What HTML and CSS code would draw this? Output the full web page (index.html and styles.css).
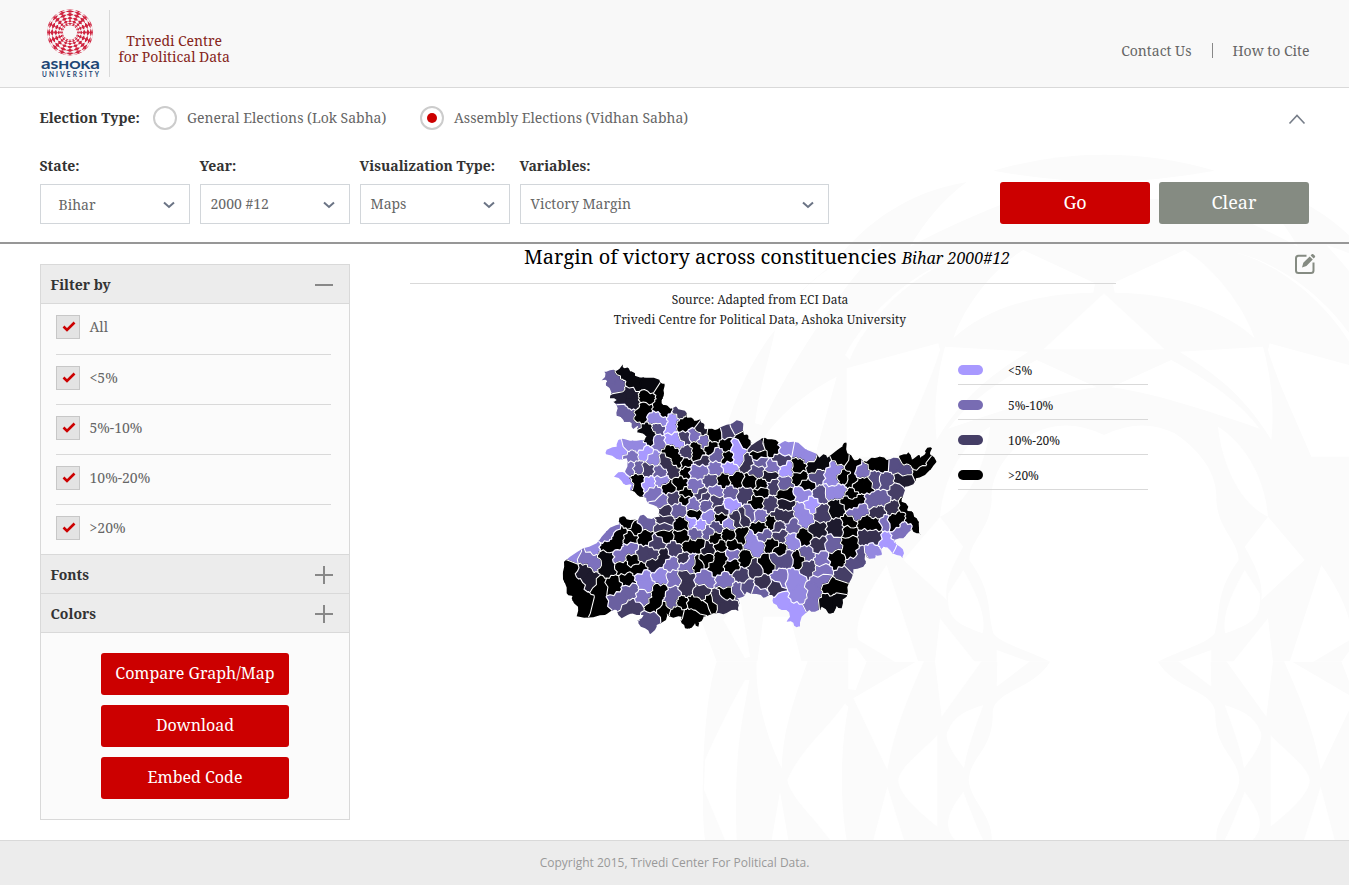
FILE: index.html
```html
<!DOCTYPE html>
<html lang="en">
<head>
<meta charset="utf-8">
<title>Trivedi Centre for Political Data</title>
<link rel="stylesheet" href="styles.css">
</head>
<body>
<svg class="watermark" viewBox="0 0 1947 2070" aria-hidden="true">
  <defs>
    <g id="wm-half">
      <path class="wm-fill" d="M880 62Q1040 14 1212 14V96Q1040 92 880 62Z"/>
      <path class="wm-fill" d="M800 96C600 130 480 240 400 340C330 400 270 440 225 540C160 620 100 740 60 900C20 1050 0 1200 0 1400L50 1535H1050C980 1500 900 1480 880 1450C860 1380 880 1330 808 1230C810 1170 870 1140 875 1050C870 960 940 890 1000 850Q1100 800 1212 855V150Q1000 140 900 165Q740 230 630 290Q700 170 800 96Z"/>
      <path class="wm-fill" d="M50 1535C10 1650 0 1950 15 2070H875C880 2000 810 1950 806 1890C810 1820 880 1800 878 1690C880 1620 1000 1620 1050 1535Z"/>
      <g class="wm-cut">
        <path d="M545 285C420 420 280 620 185 825L165 820C180 700 215 600 225 540C300 400 400 330 545 285Z"/>
        <path d="M850 300C680 330 520 460 435 615L450 630C480 540 640 340 850 300Z"/>
        <path d="M440 655L715 580L720 600C690 700 640 800 590 920H440Z"/>
        <path d="M970 300L1185 400L1180 428C1000 430 850 480 760 565C800 450 900 340 970 300Z"/>
        <path d="M735 590L985 605C900 660 800 720 710 870C700 780 710 680 735 590Z"/>
        <path d="M1212 430L1030 598H1212Z"/>
        <path d="M1010 630L1190 712C1050 730 850 800 745 836C800 760 900 690 1010 630Z"/>
        <path d="M410 680C330 720 220 800 170 900H350Z"/>
        <path d="M870 830C860 930 810 1060 720 1100C730 980 790 880 870 830Z"/>
        <path d="M720 1100L790 1190C750 1260 735 1300 740 1350L610 1230Z"/>
        <path d="M70 1410L120 1340L150 1520L135 1525Z"/>
        <path d="M190 1400L270 1400L305 1536H172Z"/>
        <path d="M560 1245L655 1536H585L475 1470C460 1420 500 1330 560 1245Z"/>
        <path d="M445 1495H470L500 1536H445Z"/>
        <path d="M720 1405L825 1536H705Z"/>
        <path d="M790 1260C830 1330 860 1400 848 1450C760 1420 740 1400 745 1330Z"/>
        <path d="M890 1500L990 1536H890Z"/>
        <path d="M170 1534H323C270 1680 250 1750 245 1855C190 1740 165 1620 170 1534Z"/>
        <path d="M135 1590L148 1590C130 1700 100 1800 110 2070H75L12 1920L15 1830C50 1750 100 1650 135 1590Z"/>
        <path d="M435 1660L445 1670C420 1800 420 1950 440 2070H390C340 2000 270 1940 262 1890C300 1800 380 1740 435 1660Z"/>
        <path d="M650 1534H672C620 1650 580 1750 562 1860L460 1645Z"/>
        <path d="M500 1534H445V1618L467 1620Z"/>
        <path d="M705 1534H845L725 1700Z"/>
        <path d="M712 1755V2030C650 1980 595 1930 595 1890C600 1850 660 1810 712 1755Z"/>
        <path d="M850 1665C830 1720 800 1800 792 1855C750 1800 730 1760 745 1740C760 1700 800 1680 850 1665Z"/>
        <path d="M892 1534H990L890 1610Z"/>
        <path d="M240 1925L265 2070H215Z"/>
        <path d="M562 1910L612 2070H520Z"/>
        <path d="M790 1925C810 1980 830 2030 850 2070H765C730 2030 740 1990 790 1925Z"/>
      </g>
    </g>
  </defs>
  <use href="#wm-half"/>
  <use href="#wm-half" transform="translate(2424 0) scale(-1 1)"/>
</svg>

<header class="site-header">
  <div class="brand">
    <svg class="logo" width="60" height="72" viewBox="0 0 60 72" role="img" aria-label="Ashoka University">
      <path id="logo-rings" class="logo-rings"/>
      <text class="logo-name" x="0" y="59.500" textLength="59" lengthAdjust="spacingAndGlyphs"><tspan class="tall">a</tspan>SHOK<tspan class="tall">a</tspan></text>
      <text class="logo-sub" x="1" y="67.700" textLength="57">UNIVERSITY</text>
    </svg>
    <div class="brand-title"><span>Trivedi Centre</span><span>for Political Data</span></div>
  </div>
  <nav class="top-nav"><a>Contact Us</a><span class="nav-sep"></span><a>How to Cite</a></nav>
</header>

<section class="search">
  <div class="type-row">
    <span class="label type-label">Election Type:</span>
    <span class="radio"></span><span class="type-name general">General Elections (Lok Sabha)</span>
    <span class="radio checked"></span><span class="type-name">Assembly Elections (Vidhan Sabha)</span>
    <svg class="collapse" width="18" height="12" viewBox="0 0 18 12"><path d="M1.500 10.500L9 2.500L16.500 10.500"/></svg>
  </div>
  <div class="field-row">
    <div class="field"><span class="label">State:</span><div class="select first"><span>Bihar</span><svg width="12" height="8" viewBox="0 0 12 8"><path d="M1 1.500L6 6L11 1.500"/></svg></div></div>
    <div class="field"><span class="label">Year:</span><div class="select"><span>2000 #12</span><svg width="12" height="8" viewBox="0 0 12 8"><path d="M1 1.500L6 6L11 1.500"/></svg></div></div>
    <div class="field"><span class="label">Visualization Type:</span><div class="select"><span>Maps</span><svg width="12" height="8" viewBox="0 0 12 8"><path d="M1 1.500L6 6L11 1.500"/></svg></div></div>
    <div class="field wide"><span class="label">Variables:</span><div class="select"><span>Victory Margin</span><svg width="12" height="8" viewBox="0 0 12 8"><path d="M1 1.500L6 6L11 1.500"/></svg></div></div>
    <div class="actions"><button class="btn go">Go</button><button class="btn clear">Clear</button></div>
  </div>
</section>

<main class="content">
  <aside class="sidebar">
    <div class="panel-head"><span>Filter by</span><span class="toggle minus"></span></div>
    <ul class="filters">
      <li><span class="check"><svg width="14" height="12" viewBox="0 0 14 12"><path d="M1.500 5.500L5 9L12.500 1.500"/></svg></span>All</li>
      <li><span class="check"><svg width="14" height="12" viewBox="0 0 14 12"><path d="M1.500 5.500L5 9L12.500 1.500"/></svg></span>&lt;5%</li>
      <li><span class="check"><svg width="14" height="12" viewBox="0 0 14 12"><path d="M1.500 5.500L5 9L12.500 1.500"/></svg></span>5%-10%</li>
      <li><span class="check"><svg width="14" height="12" viewBox="0 0 14 12"><path d="M1.500 5.500L5 9L12.500 1.500"/></svg></span>10%-20%</li>
      <li><span class="check"><svg width="14" height="12" viewBox="0 0 14 12"><path d="M1.500 5.500L5 9L12.500 1.500"/></svg></span>&gt;20%</li>
    </ul>
    <div class="panel-head"><span>Fonts</span><span class="toggle plus"></span></div>
    <div class="panel-head"><span>Colors</span><span class="toggle plus"></span></div>
    <div class="side-actions">
      <button class="btn side">Compare Graph/Map</button>
      <button class="btn side">Download</button>
      <button class="btn side">Embed Code</button>
    </div>
  </aside>

  <section class="chart">
    <h1 class="chart-title">Margin of victory across constituencies <em>Bihar 2000#12</em></h1>
    <p class="source">Source: Adapted from ECI Data<br>Trivedi Centre for Political Data, Ashoka University</p>
    <div class="map-row">
      <svg id="map" class="map" width="400" height="290" viewBox="0 0 1200 870"></svg>
      <ul class="legend">
        <li><span class="swatch s1"></span><span class="key">&lt;5%</span></li>
        <li><span class="swatch s2"></span><span class="key">5%-10%</span></li>
        <li><span class="swatch s3"></span><span class="key">10%-20%</span></li>
        <li><span class="swatch s4"></span><span class="key">&gt;20%</span></li>
      </ul>
    </div>
  </section>
  <svg class="edit" width="22" height="22" viewBox="0 0 22 22"><path class="edit-box" d="M12.500 2.700H4.500Q2 2.700 2 5.200V17.500Q2 20 4.500 20H17Q19.500 20 19.500 17.500V9.500"/><path class="edit-pen" d="M8 14.500L9.300 9.800L15.700 3.400L18.800 6.500L12.400 12.900Z M16.600 2.500L18 1.100Q18.800 .6 19.600 1.400L20.900 2.700Q21.500 3.500 20.900 4.200L19.600 5.600Z"/></svg>
</main>
<footer class="site-footer">Copyright 2015, Trivedi Center For Political Data.</footer>
<script src="map.js"></script>
</body>
</html>
```

FILE: styles.css
```css
* { box-sizing: border-box; }
body {
  margin: 0;
  height: 885px;
  display: flex;
  flex-direction: column;
  overflow: hidden;
  background: #fff;
  color: #666;
  font: 14px/20px "Noto Serif", "Droid Serif", "DejaVu Serif Condensed", serif;
}
ul, h1, p { margin: 0; padding: 0; list-style: none; font-weight: normal; }
.watermark { position: absolute; left: 700px; top: 150px; width: 649px; height: 690px; z-index: -1; }
.wm-fill { fill: #fbfbfb; }
.wm-cut { fill: #fff; }

.site-header { height: 88px; flex: none; display: flex; justify-content: space-between; padding: 0 39.5px 0 40px; background: #f8f8f8; border-bottom: 1px solid #d9d9d9; }
.brand { display: flex; padding-top: 9px; }
.logo { margin-left: 1px; overflow: visible; }
.logo-rings { fill: #cf2440; fill-rule: evenodd; }
.logo-name { font: 900 11.5px "Lato", sans-serif; fill: #1d4675; }
.logo-name .tall { font-size: 15.5px; font-weight: bold; }
.logo-sub { font: bold 6.5px "Lato", sans-serif; fill: #1d4675; }
.brand-title { display: flex; flex-direction: column; margin: 1px 0 0 8px; padding: 23px 0 0 8.5px; height: 67px; border-left: 1px solid #d9d9d9; text-align: center; line-height: 16px; letter-spacing: -.03px; color: #86251b; }
.top-nav { display: flex; align-items: center; padding-top: 14px; }
.nav-sep { width: 1px; height: 15px; margin: 0 19px 0 21px; background: #888; }

.search { height: 156px; flex: none; padding: 18px 40px 0; border-bottom: 2px solid #979797; }
.label { font-weight: bold; color: #333; margin-left: -.5px; }
.type-row { display: flex; align-items: center; height: 24px; }
.type-label { width: 113.5px; }
.type-name { margin-left: 10px; white-space: nowrap; }
.type-name.general { width: 233px; }
.radio { width: 24px; height: 24px; flex: none; border: 2px solid #ccc; border-radius: 50%; background: #fff; display: flex; align-items: center; justify-content: center; }
.radio.checked::after { content: ""; width: 10px; height: 10px; border-radius: 50%; background: #c00; }
.collapse { margin: 2px 3px 0 auto; }
.collapse path { fill: none; stroke: #777e89; stroke-width: 1.6; }
.field-row { display: flex; gap: 10px; margin-top: 26px; }
.field { width: 150px; }
.field.wide { width: 309px; }
.field .label { display: block; height: 28px; white-space: nowrap; }
.select { height: 40px; padding: 0 14px 0 9.5px; display: flex; align-items: center; justify-content: space-between; border: 1px solid #d2d6da; background: #fff; }
.select.first { padding: 0 14px 0 17.5px; }
.select.first span { padding-top: 2px; }
.select svg { margin-top: 2px; }
.select path { fill: none; stroke: #6b7485; stroke-width: 2; }
.btn { border: 0; padding: 0 0 2px; border-radius: 3px; color: #fff; background: #c00; height: 42px; font-family: inherit; }
.actions { display: flex; gap: 9px; margin: 26px 0 0 auto; }
.actions .btn { width: 150px; font-size: 18px; }
.actions .clear { background: #858b82; }

.content { flex: 1; display: flex; padding: 20px 33px 20px 40px; }
.sidebar { width: 310px; flex: none; border: 1px solid #d9d9d9; background: #fbfbfb; }
.panel-head { height: 39px; display: flex; align-items: center; justify-content: space-between; padding: 2px 16px 0 9.5px; background: #ececec; border-bottom: 1px solid #d9d9d9; font-weight: bold; color: #333; }
.toggle { width: 18px; height: 18px; margin-top: -1px; }
.minus { background: linear-gradient(#888, #888) center / 18px 2px no-repeat; }
.plus { background: linear-gradient(#888, #888) center / 18px 2px no-repeat, linear-gradient(#888, #888) center / 2px 18px no-repeat; }
.filters { padding: 0 18px 0 15px; border-bottom: 1px solid #d9d9d9; }
.filters li { height: 50px; display: flex; align-items: center; gap: 9.5px; border-bottom: 1px solid #d9d9d9; padding-bottom: 3px; }
.filters li:first-child { height: 51px; padding-bottom: 4px; }
.filters li:last-child { height: 49px; border: 0; padding-bottom: 3px; }
.check { width: 24px; height: 24px; display: flex; align-items: center; justify-content: center; border: 1px solid #c7c7c7; background: #e3e3e3; }
.check svg { margin-left: 1px; }
.check path { fill: none; stroke: #c00; stroke-width: 2.6; }
.side-actions { display: flex; flex-direction: column; align-items: center; gap: 10px; padding-top: 20px; }
.side { width: 188px; font-size: 16px; }

.chart { width: 738px; margin: -20px 0 0 60px; color: #222; }
.chart-title { width: 706px; height: 40px; padding-left: 8px; border-bottom: 1px solid #d9d9d9; font-size: 20px; line-height: 25px; text-align: center; color: #000; white-space: nowrap; }
.chart-title em { font-size: 16px; }
.source { width: 700px; padding-top: 6px; font-size: 12px; text-align: center; }
.map-row { display: flex; margin-top: 25px; }
.map { margin-left: 140px; flex: none; }
.legend { width: 190px; margin-left: 8px; flex: none; font-size: 12px; }
.legend li { height: 35px; display: flex; align-items: center; gap: 25px; padding-top: 6px; border-bottom: 1px solid #d9d9d9; }
.legend li:first-child { height: 30px; padding-top: 1px; }
.key { padding-top: 2px; }
.swatch { width: 25px; height: 10px; border-radius: 5px; }
.s1 { background: #a899ff; } .s2 { background: #786cb3; } .s3 { background: #453e66; } .s4 { background: #000; }
.edit { margin: -11px 0 0 auto; }
.edit-box { fill: none; stroke: #858b82; stroke-width: 2; }
.edit-pen { fill: #858b82; }
.site-footer { height: 45px; flex: none; border-top: 1px solid #d9d9d9; background: #ececec; text-align: center; font: 12px/43px "Open Sans", sans-serif; color: #999; }
```

FILE: map.js
```js
const NS = "http://www.w3.org/2000/svg";
function add(parent, tag, attrs) {
  const el = document.createElementNS(NS, tag);
  for (const k in attrs) el.setAttribute(k, attrs[k]);
  parent.appendChild(el);
  return el;
}

// Emblem: overlapping circles filled even-odd make a rosette of diamonds
let rosette = "";
for (let i = 0; i < 16; i++) {
  const t = i * Math.PI / 8;
  const cx = 29 + 8 * Math.cos(t), cy = 23.5 + 8 * Math.sin(t);
  rosette += `M${cx - 15} ${cy}a15 15 0 1 0 30 0a15 15 0 1 0 -30 0Z`;
}
document.getElementById("logo-rings").setAttribute("d", rosette);

// Margin scale, from narrow to wide victories
const SHADES = { a: "#a899ff", b: "#9488e0", c: "#7d71bd", d: "#6a60a0", e: "#564e83", f: "#453e66", g: "#37314f", h: "#1e1b2e", i: "#08080e", k: "#000" };

// Sheets of constituency anchor points: [dx, dy, "shade x,y x,y; ..."]
const SHEETS = [
 [0, 0, `d 190,65 205,95 180,60; i 215,50 250,85 300,90; h 238,115 215,130 245,145; k 292,130; k 336,110 325,158 345,172;
 d 215,165 238,180 250,212; k 268,185 290,160; b 315,185 335,200; e 330,218; a 368,190 360,220; f 385,172; k 400,210 428,198;
 i 285,228 300,248; c 325,260; a 365,250 385,262; f 405,250; c 432,240; c 460,262; h 455,220; k 495,240; k 530,268; f 530,232;
 e 562,215; k 578,255; a 215,285 185,292; b 235,270 265,272; a 285,295; c 243,305; b 310,312; c 240,340; d 264,340; g 345,322 370,348;
 k 365,290 385,320; k 405,328; k 408,348; f 410,290; k 440,280 445,300; k 482,278; d 500,300; k 535,310; a 560,275 565,312;
 g 455,320; f 292,345; d 330,352; a 215,375 235,395; k 265,375 257,405; a 295,385; b 335,378; k 355,398; k 390,385;
 c 435,350 455,345; c 495,342; a 540,335; e 483,375; k 520,380; k 558,378; c 435,393; c 315,412; k 408,418; f 455,422; c 500,408; d 540,412`],
 [570, 150, `g 52,125; k 92,115 100,130; k 58,152; g 20,175; d 60,170; f 122,165; b 135,130; b 180,135 205,155; c 98,188; a 140,195;
 e 50,197; h 90,213; k 30,230; k 65,243; d 132,235; f 100,242; k 178,185; k 180,218; k 200,240; e 230,215; i 250,170 220,185;
 b 285,190 275,225; k 300,160 312,220; k 340,180 330,230; c 368,195; k 395,170 425,175; e 405,225; e 435,230; e 465,175 490,195;
 k 500,160 535,170 560,150; k 580,165 545,205; h 490,222; f 468,262; k 355,245 380,240; b 270,258 300,258; e 243,268; k 335,266;
 k 325,292 355,290; d 395,290 425,280; f 15,268; k 65,258; k 135,270; b 190,265; a 215,300; b 185,320 195,345; f 245,325; i 290,310;
 c 345,330 365,312; g 412,322; g 460,310; k 330,350; k 330,382; k 375,355 410,358; k 460,355 475,335; k 495,305 515,345 530,375;
 c 475,390 500,370; c 434,355; g 375,395 410,395; h 230,375; h 290,370; f 90,300; k 50,292; h 135,300; g 115,330 140,335;
 d 30,325; c 60,335; k 95,352; f 115,365; d 158,362; k 60,368; d 72,390; b 30,405 50,425; k 193,395; b 155,408; f 120,392; g 235,420; d 280,418; k 95,418; k 120,435`],
 [570, 435, `a 435,120 450,140; a 475,155; b 395,155; k 330,125 335,155; e 365,165 345,190; k 288,175; c 245,178; c 245,212; f 205,200;
 d 202,165; k 175,180; e 110,180 140,175; k 82,190; g 40,205; g 70,255; g 105,262; c 122,235; b 160,235 180,285; a 120,305 170,335;
 c 245,240 220,280 215,315; f 315,230; k 270,262 305,260; i 260,305 300,300; d 60,275; e 20,265`],
 [0, 420, `c 335,18; f 370,10; k 405,10; c 430,28; f 458,5; d 470,30; f 500,20; g 515,42; a 540,30; g 345,48; d 385,45; k 435,62; a 425,80;
 k 398,88; a 450,90; b 475,65; k 512,72; b 535,85; g 558,72; g 582,65; k 235,80; k 255,100; d 288,85; g 345,75; f 340,97; k 345,118;
 k 210,115 170,155 195,145; c 165,125 190,100; k 240,128; k 285,128; f 320,145; f 280,175 310,180; h 315,205 340,185; k 395,125; d 438,115; d 475,112;
 e 500,95; k 535,120; k 495,130; f 375,165; k 418,155 445,150; k 510,155; k 550,150; h 475,160; k 575,125; b 130,155 70,185;
 c 105,190 130,205; i 170,185 172,220; c 240,163 210,185; k 245,195; k 220,215 265,225; k 60,220 75,280 100,325; h 105,225 125,255;
 k 150,270 150,340; k 190,270; k 235,255; b 275,245 290,270; b 330,245; c 365,205; c 372,250; g 402,190; c 410,215 425,200; k 440,205;
 k 470,195; k 515,185 495,215; k 548,210; c 545,180; k 585,195; g 405,245 410,285; c 465,250; c 527,260; f 575,240; d 565,285;
 d 240,285 205,320; f 250,340 230,350; c 282,305; k 325,290 312,330; d 372,300 365,325; g 450,293; k 530,293; g 505,315 530,335;
 k 395,322; k 430,320 460,340; k 480,325; k 345,345; k 415,365 440,370; k 380,350; e 300,375`]
];

const OUTLINE = [
 [0, 0, "196,48 208,42 218,28 224,40 236,40 250,52 255,62 290,68 328,74 338,86 344,92 342,115 335,135 340,150 360,160 370,158 380,156 395,165 410,175 412,188 430,192 440,197 452,195 460,205 462,218 472,222 495,225 515,215 540,208 560,196 580,206 582,240 595,242"],
 [570, 150, "30,105 32,122 50,110 75,98 95,103 115,112 112,122 135,108 160,110 185,122 215,140 238,158 250,148 262,158 285,140 308,124 312,114 320,116 322,145 340,162 353,165 360,160 380,170 395,158 420,155 440,165 460,158 480,165 478,152 500,148 505,142 515,165 535,150 540,158 555,148 555,140 562,128 576,130 570,148 590,170 575,190 555,210 528,220 520,238 495,245 490,270 485,290 505,305 503,318 520,325 530,340 537,368 542,390 530,385 515,370 512,375"],
 [570, 435, "490,115 462,120 480,140 492,160 488,175 470,165 450,150 430,140 422,150 425,165 405,165 405,175 380,172 375,165 378,185 370,200 340,208 335,235 322,262 320,290 308,298 305,325 290,318 280,338 265,340 245,320 242,330 225,335 208,330 185,350 180,380 170,382 160,368 140,365 150,350 140,330 115,325 100,310 100,290 88,285 70,293 50,282 20,275 10,290"],
 [0, 420, "560,308 568,325 565,348 545,345 520,358 490,355 460,365 455,378 445,380 445,395 435,385 425,398 405,400 395,385 395,365 370,368 350,355 348,375 320,390 315,405 300,418 285,400 265,385 262,375 275,370 280,360 245,355 215,370 200,345 183,348 165,360 130,367 80,364 84,335 65,310 65,302 50,295 45,265 38,235 42,200 60,185 100,160 140,145 155,125 180,98 210,88 208,68 225,65 240,75 265,78 270,62 285,62 305,72 330,65 328,45 310,30 290,18 282,5"],
 [0, 0, "262,420 240,405 245,390 230,390 215,378 192,365 205,352 225,355 232,335 230,310 200,312 168,298 170,284 200,275 205,255 225,253 260,257 283,258 290,244 262,232 265,212 250,222 245,205 230,200 220,195 200,182 203,160 190,140 200,135 180,130 185,115 168,90 172,78 155,76 165,66 163,50 180,46"]
];

const sites = [];
let region = 0;
for (const [dx, dy, rows] of SHEETS) {
  for (const row of rows.split(";")) {
    const [shade, ...pts] = row.trim().split(/\s+/);
    for (const p of pts) {
      const [x, y] = p.split(",").map(Number);
      sites.push({ x: x + dx, y: y + dy, shade, region });
    }
    region++;
  }
}

// Cut a polygon by the bisector between two sites; each vertex keeps the neighbour of the edge that leaves it
function cut(poly, a, b, j) {
  const nx = b.x - a.x, ny = b.y - a.y;
  const c = (b.x * b.x + b.y * b.y - a.x * a.x - a.y * a.y) / 2;
  const out = [];
  poly.forEach((p, i) => {
    const q = poly[(i + 1) % poly.length];
    const dp = nx * p.x + ny * p.y - c, dq = nx * q.x + ny * q.y - c;
    const t = dp / (dp - dq);
    const m = { x: p.x + (q.x - p.x) * t, y: p.y + (q.y - p.y) * t };
    if (dp <= 0) {
      out.push(p);
      if (dq > 0) out.push({ ...m, n: j });
    } else if (dq <= 0) out.push({ ...m, n: p.n });
  });
  return out;
}

// Irregular boundary points between two shared corners, equal from both sides
function wiggle(p, q) {
  const flip = p.x > q.x || (Math.abs(p.x - q.x) < .01 && p.y > q.y);
  const [s, e] = flip ? [q, p] : [p, q];
  const len = Math.hypot(e.x - s.x, e.y - s.y);
  const seed = Math.round(s.x + e.x) * 12.99 + Math.round(s.y + e.y) * 78.23;
  const pts = [.25, .5, .75].map((t, i) => {
    const r = Math.sin(seed + i * 2.1) * Math.min(5.5, len * .14);
    return [s.x + (e.x - s.x) * t - (e.y - s.y) / (len || 1) * r, s.y + (e.y - s.y) * t + (e.x - s.x) / (len || 1) * r];
  });
  return flip ? pts.reverse() : pts;
}
const fmt = a => a.map(v => v.toFixed(1)).join(" ");

const map = document.getElementById("map");
const clip = add(add(map, "defs", {}), "clipPath", { id: "state" });
const edgePts = OUTLINE.flatMap(([dx, dy, s]) => s.split(" ").map(p => {
  const [x, y] = p.split(",").map(Number);
  return [x + dx, y + dy];
}));
const rough = edgePts.flatMap((p, i) => {
  const q = edgePts[(i + 1) % edgePts.length];
  const k = i % 2 ? 2.5 : -2.5;
  return [p, [(p[0] + q[0]) / 2 + k, (p[1] + q[1]) / 2 - k]];
});
add(clip, "polygon", { points: rough.map(p => p.join(",")).join(" ") });
const land = add(map, "g", { "clip-path": "url(#state)" });
const fills = [];
let borders = "";
sites.forEach((a, i) => {
  let poly = [[-50, -50], [1250, -50], [1250, 920], [-50, 920]].map(([x, y]) => ({ x, y, n: -1 }));
  sites.forEach((b, j) => { if (j !== i) poly = cut(poly, a, b, j); });
  let d = "";
  poly.forEach((p, k) => {
    const q = poly[(k + 1) % poly.length];
    const mid = wiggle(p, q);
    d += (k ? "L" : "M") + fmt([p.x, p.y]) + mid.map(m => "L" + fmt(m)).join("");
    if (p.n > i && sites[p.n].region !== a.region) {
      borders += "M" + fmt([p.x, p.y]) + mid.map(m => "L" + fmt(m)).join("") + "L" + fmt([q.x, q.y]);
    }
  });
  add(land, "path", { d: d + "Z", fill: SHADES[a.shade], stroke: SHADES[a.shade], "stroke-width": 4, "stroke-linejoin": "round" });
});
add(land, "path", { d: borders, fill: "none", stroke: "#fff", "stroke-width": 3.2, "stroke-linejoin": "round" });
```
